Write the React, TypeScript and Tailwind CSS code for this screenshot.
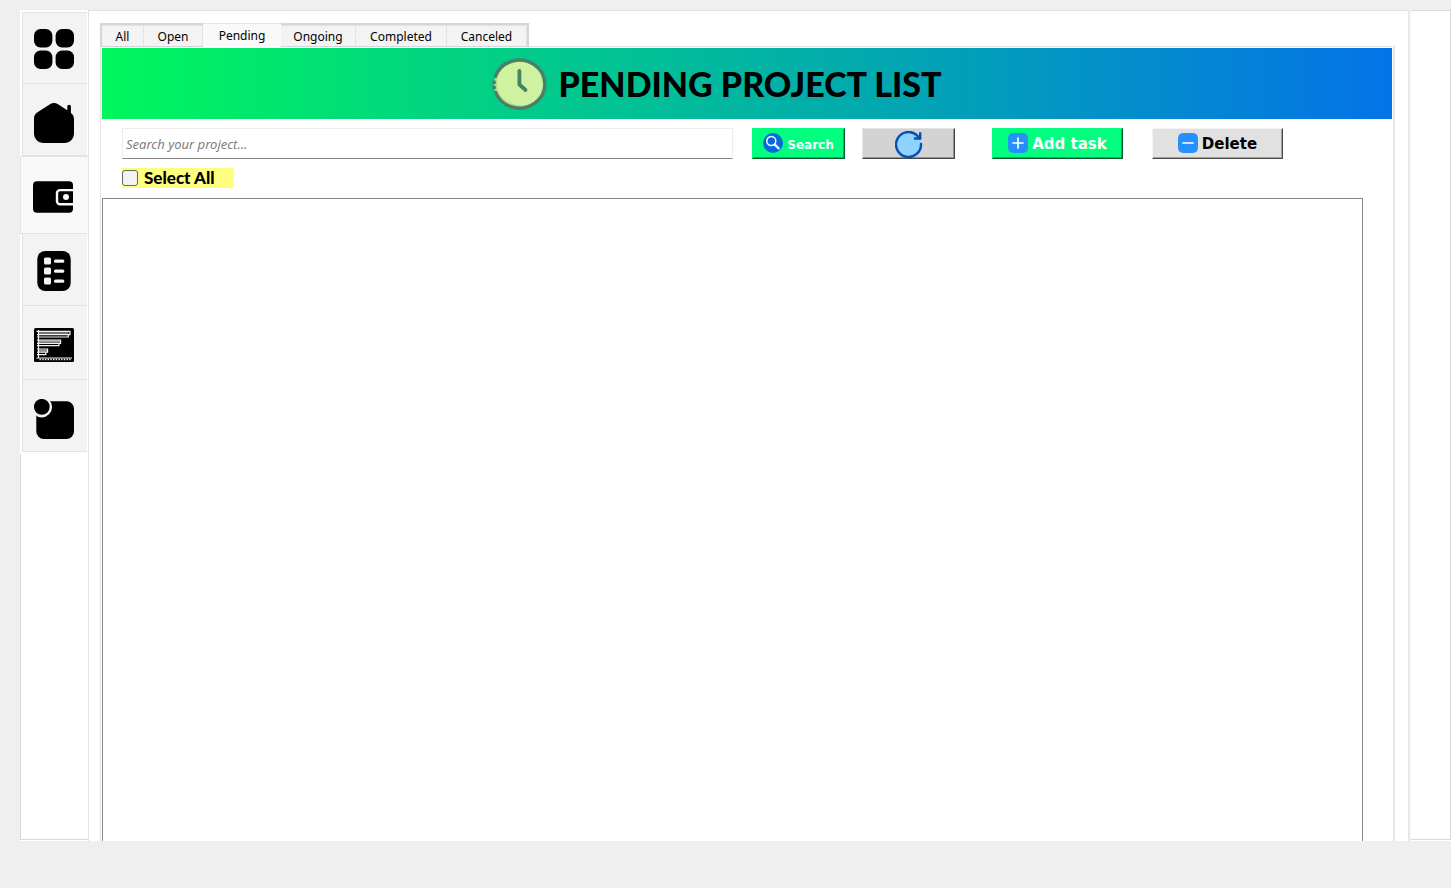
import type { ReactNode } from "react";

function GridIcon() {
  return (
    <svg width="40" height="40" viewBox="0 0 40 40" aria-hidden="true">
      <rect width="18.4" height="18.4" rx="6.5" />
      <rect x="21.6" width="18.4" height="18.4" rx="6.5" />
      <rect y="21.6" width="18.4" height="18.4" rx="6.5" />
      <rect x="21.6" y="21.6" width="18.4" height="18.4" rx="6.5" />
    </svg>
  );
}

function HomeIcon() {
  return (
    <svg width="40" height="40" viewBox="0 0 40 40" aria-hidden="true">
      <path d="M16 1.2C18.5-.4 21.5-.4 24 1.2L33.3 7.2V3.6a1.8 1.8 0 0 1 3.6 0V10C39 11.6 40 13.4 40 16V31a9 9 0 0 1-9 9H9a9 9 0 0 1-9-9V16C0 12.8 1 10.9 3.5 9.3Z" />
    </svg>
  );
}

function WalletIcon() {
  return (
    <svg width="42" height="40" viewBox="0 0 42 40" aria-hidden="true">
      <rect x="0" y="4.3" width="40" height="31.4" rx="4" />
      <path d="M41 13.1H27a3 3 0 0 0-3 3v8.2a3 3 0 0 0 3 3h14" fill="none" stroke="#f9f9f9" strokeWidth="2.4" />
      <circle cx="33" cy="20" r="3" fill="#f9f9f9" />
    </svg>
  );
}

function ListIcon() {
  return (
    <svg width="40" height="40" viewBox="0 0 40 40" aria-hidden="true">
      <rect x="3.3" width="33.4" height="40" rx="8" />
      <g fill="#f3f3f3">
        <rect x="10" y="6.6" width="7" height="7" rx="1.5" />
        <rect x="10" y="16.6" width="7" height="7" rx="1.5" />
        <rect x="10" y="26.6" width="7" height="7" rx="1.5" />
        <rect x="20" y="8.5" width="10.3" height="3.2" rx="1.5" />
        <rect x="20" y="18.5" width="10.3" height="3.2" rx="1.5" />
        <rect x="20" y="28.5" width="10.3" height="3.2" rx="1.5" />
      </g>
    </svg>
  );
}

function ChartIcon() {
  return (
    <svg width="40" height="40" viewBox="0 0 40 40" aria-hidden="true">
      <rect y="3" width="40" height="34" rx="1.5" />
      <path d="M5 8H34.5M5 16.8H26M5 25.6H13" stroke="#9b9b9b" strokeWidth="1.6" />
      <g fill="none" stroke="#f3f3f3">
        <path d="M4.5 5V33M2.5 6.4H36V9.6H3M34.3 9.6V12H3M3 15.2H26.6V18.4H3M24.9 18.4V20.7H3M3 24H13.6V27.2H3M11.8 27.2V29.7H3" strokeWidth="1.2" />
        <path d="M2.5 33H38" strokeWidth="1.2" />
        <path d="M5.5 34.5H37" strokeWidth="1.6" strokeDasharray="1.4 1.3" />
      </g>
    </svg>
  );
}

function NoticeIcon() {
  return (
    <svg width="40" height="40" viewBox="0 0 40 40" aria-hidden="true">
      <rect x="2.3" y="2.3" width="37.7" height="37.7" rx="7.5" />
      <circle cx="7.7" cy="8" r="10.4" fill="#f3f3f3" />
      <circle cx="7.8" cy="7.8" r="7.9" />
    </svg>
  );
}

function ClockIcon() {
  return (
    <svg width="56" height="52" viewBox="0 0 56 52" aria-hidden="true">
      <ellipse cx="28" cy="26" rx="25" ry="24" fill="#b5d88e" />
      <path d="M9 11A25 24 0 0 1 52 31C47 44 36 49 25 47C13 44 6 37 6 26C6 20 7 14 9 11Z" fill="#cff2a1" />
      <path d="M4.5 18.5A25.3 24 0 1 1 4.8 34.5" fill="none" stroke="#4a8066" strokeWidth="3.4" strokeLinecap="round" />
      <circle cx="3" cy="24.2" r="2" fill="#4a8066" />
      <circle cx="3" cy="29.4" r="2" fill="#4a8066" />
      <path d="M28.4 13V26.5L34.5 32" fill="none" stroke="#4a8066" strokeWidth="3.8" strokeLinecap="round" strokeLinejoin="round" />
    </svg>
  );
}

function SearchIcon() {
  return (
    <svg className="mb-1" width="20" height="20" viewBox="0 0 20 20" aria-hidden="true">
      <circle cx="10" cy="10" r="10" fill="#0468e0" />
      <circle cx="8.3" cy="8" r="4.5" fill="#0468e0" stroke="#fff" strokeWidth="1.5" />
      <path d="M11.6 11.4L15.6 15.4" stroke="#fff" strokeWidth="2.2" strokeLinecap="round" />
    </svg>
  );
}

function RefreshIcon() {
  return (
    <svg width="28" height="28" viewBox="0 0 28 28" aria-hidden="true">
      <circle cx="13.5" cy="13.6" r="12.4" fill="#8fd2ff" />
      <path d="M26 12.9A12.5 12.5 0 1 1 21.4 3.8L25 7.3" fill="none" stroke="#0550b3" strokeWidth="2.4" strokeLinecap="round" />
      <path d="M25.2 1.3V7.5H19" fill="none" stroke="#0550b3" strokeWidth="2.4" strokeLinejoin="round" />
    </svg>
  );
}

function SquareIcon({ plus = false }: { plus?: boolean }) {
  return (
    <svg className="mb-1" width="20" height="20" viewBox="0 0 20 20" aria-hidden="true">
      <rect width="20" height="20" rx="5" fill="#2690ff" />
      <path d={plus ? "M5 10H15M10 5V15" : "M5 10H15"} stroke="#fff" strokeWidth="1.7" strokeLinecap="round" />
    </svg>
  );
}

const sections: { label: string; icon: ReactNode; className: string }[] = [
  { label: "Dashboard", icon: <GridIcon />, className: "h-[72px] ml-0.5 mr-px pt-4 border-t bg-[#f3f3f3]" },
  { label: "Home", icon: <HomeIcon />, className: "h-[72px] ml-0.5 mr-px pt-[19px] bg-[#f3f3f3]" },
  { label: "Projects", icon: <WalletIcon />, className: "h-[78px] pt-5 border-t bg-[#f9f9f9]" },
  { label: "Tasks", icon: <ListIcon />, className: "h-[72px] ml-0.5 mr-px pt-[17px] bg-[#f3f3f3]" },
  { label: "Charts", icon: <ChartIcon />, className: "h-[74px] ml-0.5 mr-px pt-[19px] bg-[#f3f3f3]" },
  { label: "Notices", icon: <NoticeIcon />, className: "h-[72px] ml-0.5 mr-px pt-[19px] bg-[#f3f3f3]" },
];

const tabs = [
  { label: "All", className: "w-[42px]" },
  { label: "Open", className: "w-[59px]" },
  { label: "Pending", className: "w-[78px]" },
  { label: "Ongoing", className: "w-[75px]" },
  { label: "Completed", className: "w-[91px]" },
  { label: "Canceled", className: "w-[80px]" },
];

const raised = "flex h-[31px] shrink-0 items-center justify-center gap-1 border pt-0.5 font-['DejaVu_Sans',sans-serif] font-bold";
const green = "border-[#00ff7f] border-r-[#005a2d] border-b-[#005a2d] bg-[#00ff7f] text-white shadow-[inset_-1px_-1px_0_#00b058]";

export default function App() {
  return (
    <div className="flex min-h-screen bg-[#efefef] pt-2.5 pb-[47px] pl-5 font-['Noto_Sans',sans-serif] text-black">
      <aside className="flex w-[68px] shrink-0 flex-col bg-white">
        <nav className="flex flex-col pt-0.5 pb-0.5" aria-label="Sections">
          {sections.map((s) => (
            <button key={s.label} type="button" aria-label={s.label} className={`flex items-start justify-center border-b border-l border-[#e2e2e2] pr-0.5 ${s.className}`}>
              {s.icon}
            </button>
          ))}
        </nav>
        <div className="mb-px flex-1 border-b border-l border-[#dadada]" />
      </aside>

      <main className="flex min-w-0 flex-1 flex-col border-t border-r border-l border-[#e2e2e2] bg-white pt-3 pr-[13px] pl-[11px]">
        <div role="tablist" className="relative z-10 flex h-6 w-[429px] items-end border-2 border-b border-[#d6d6d6] text-[12px] leading-4">
          {tabs.map((t) =>
            t.label === "Pending" ? (
              <button key={t.label} type="button" role="tab" aria-selected="true" className={`-mb-px flex h-6 shrink-0 items-center justify-center border-t border-[#e5e5e5] bg-[#f9f9f9] ${t.className}`}>
                {t.label}
              </button>
            ) : (
              <button key={t.label} type="button" role="tab" aria-selected="false" className={`flex h-[21px] shrink-0 items-center justify-center border-t border-r border-[#e2e2e2] bg-[#f3f3f3] pt-0.5 ${t.className}`}>
                {t.label}
              </button>
            ),
          )}
        </div>
        <section className="-mt-px flex flex-1 flex-col border-t border-r-2 border-l border-[#e5e5e5] pt-px pr-px pl-px">
          <header className="flex h-[71px] shrink-0 items-center justify-center gap-3 bg-linear-to-r/srgb from-[#00f75c] to-[#0473e8] pr-[62px]">
            <ClockIcon />
            <h1 className="font-['Lato',sans-serif] text-[34px] leading-10 font-black whitespace-nowrap">PENDING PROJECT LIST</h1>
          </header>

          <div className="mt-[9px] mr-[109px] ml-5 flex">
            <input
              type="text"
              aria-label="Search your project"
              placeholder="Search your project..."
              className="h-[31px] min-w-0 flex-1 border border-[#ececec] border-b-[#868686] px-[3px] text-[13px] italic outline-none placeholder:text-[#808080]"
            />
            <button type="button" className={`ml-[19px] w-[93px] text-[12px] ${green} ${raised}`}>
              <SearchIcon />
              Search
            </button>
            <button type="button" aria-label="Refresh" className={`ml-[17px] w-[93px] border-[#e3e3e3] border-r-[#444444] border-b-[#444444] bg-[#d3d3d3] shadow-[inset_-1px_-1px_0_#929292] ${raised}`}>
              <RefreshIcon />
            </button>
            <button type="button" className={`ml-[37px] w-[131px] text-[15px] ${green} ${raised}`}>
              <SquareIcon plus />
              Add task
            </button>
            <button type="button" className={`ml-[29px] w-[131px] border-[#f3f3f3] border-r-[#4a4a4a] border-b-[#4a4a4a] bg-[#e1e1e1] text-[15px] shadow-[inset_-1px_-1px_0_#a0a0a0] ${raised}`}>
              <SquareIcon />
              Delete
            </button>
          </div>

          <label className="mt-[9px] ml-5 flex h-5 w-28 items-center gap-1.5 bg-[#ffff7f] font-['Lato',sans-serif] text-[17px] leading-5 font-black whitespace-nowrap">
            <input type="checkbox" className="size-4 shrink-0 appearance-none rounded-[3px] border border-[#666666] bg-[#f3f3f3] checked:bg-[#0468e0]" />
            Select All
          </label>

          <div className="mt-2.5 mr-[29px] flex-1 border-t border-r border-l border-[#828790]" />
        </section>
      </main>

      <aside className="flex w-[42px] shrink-0 flex-col border-l-2 border-[#f3f3f3] bg-white pb-px">
        <div className="flex-1 border-t border-r border-b border-[#dadada]" />
      </aside>
    </div>
  );
}
